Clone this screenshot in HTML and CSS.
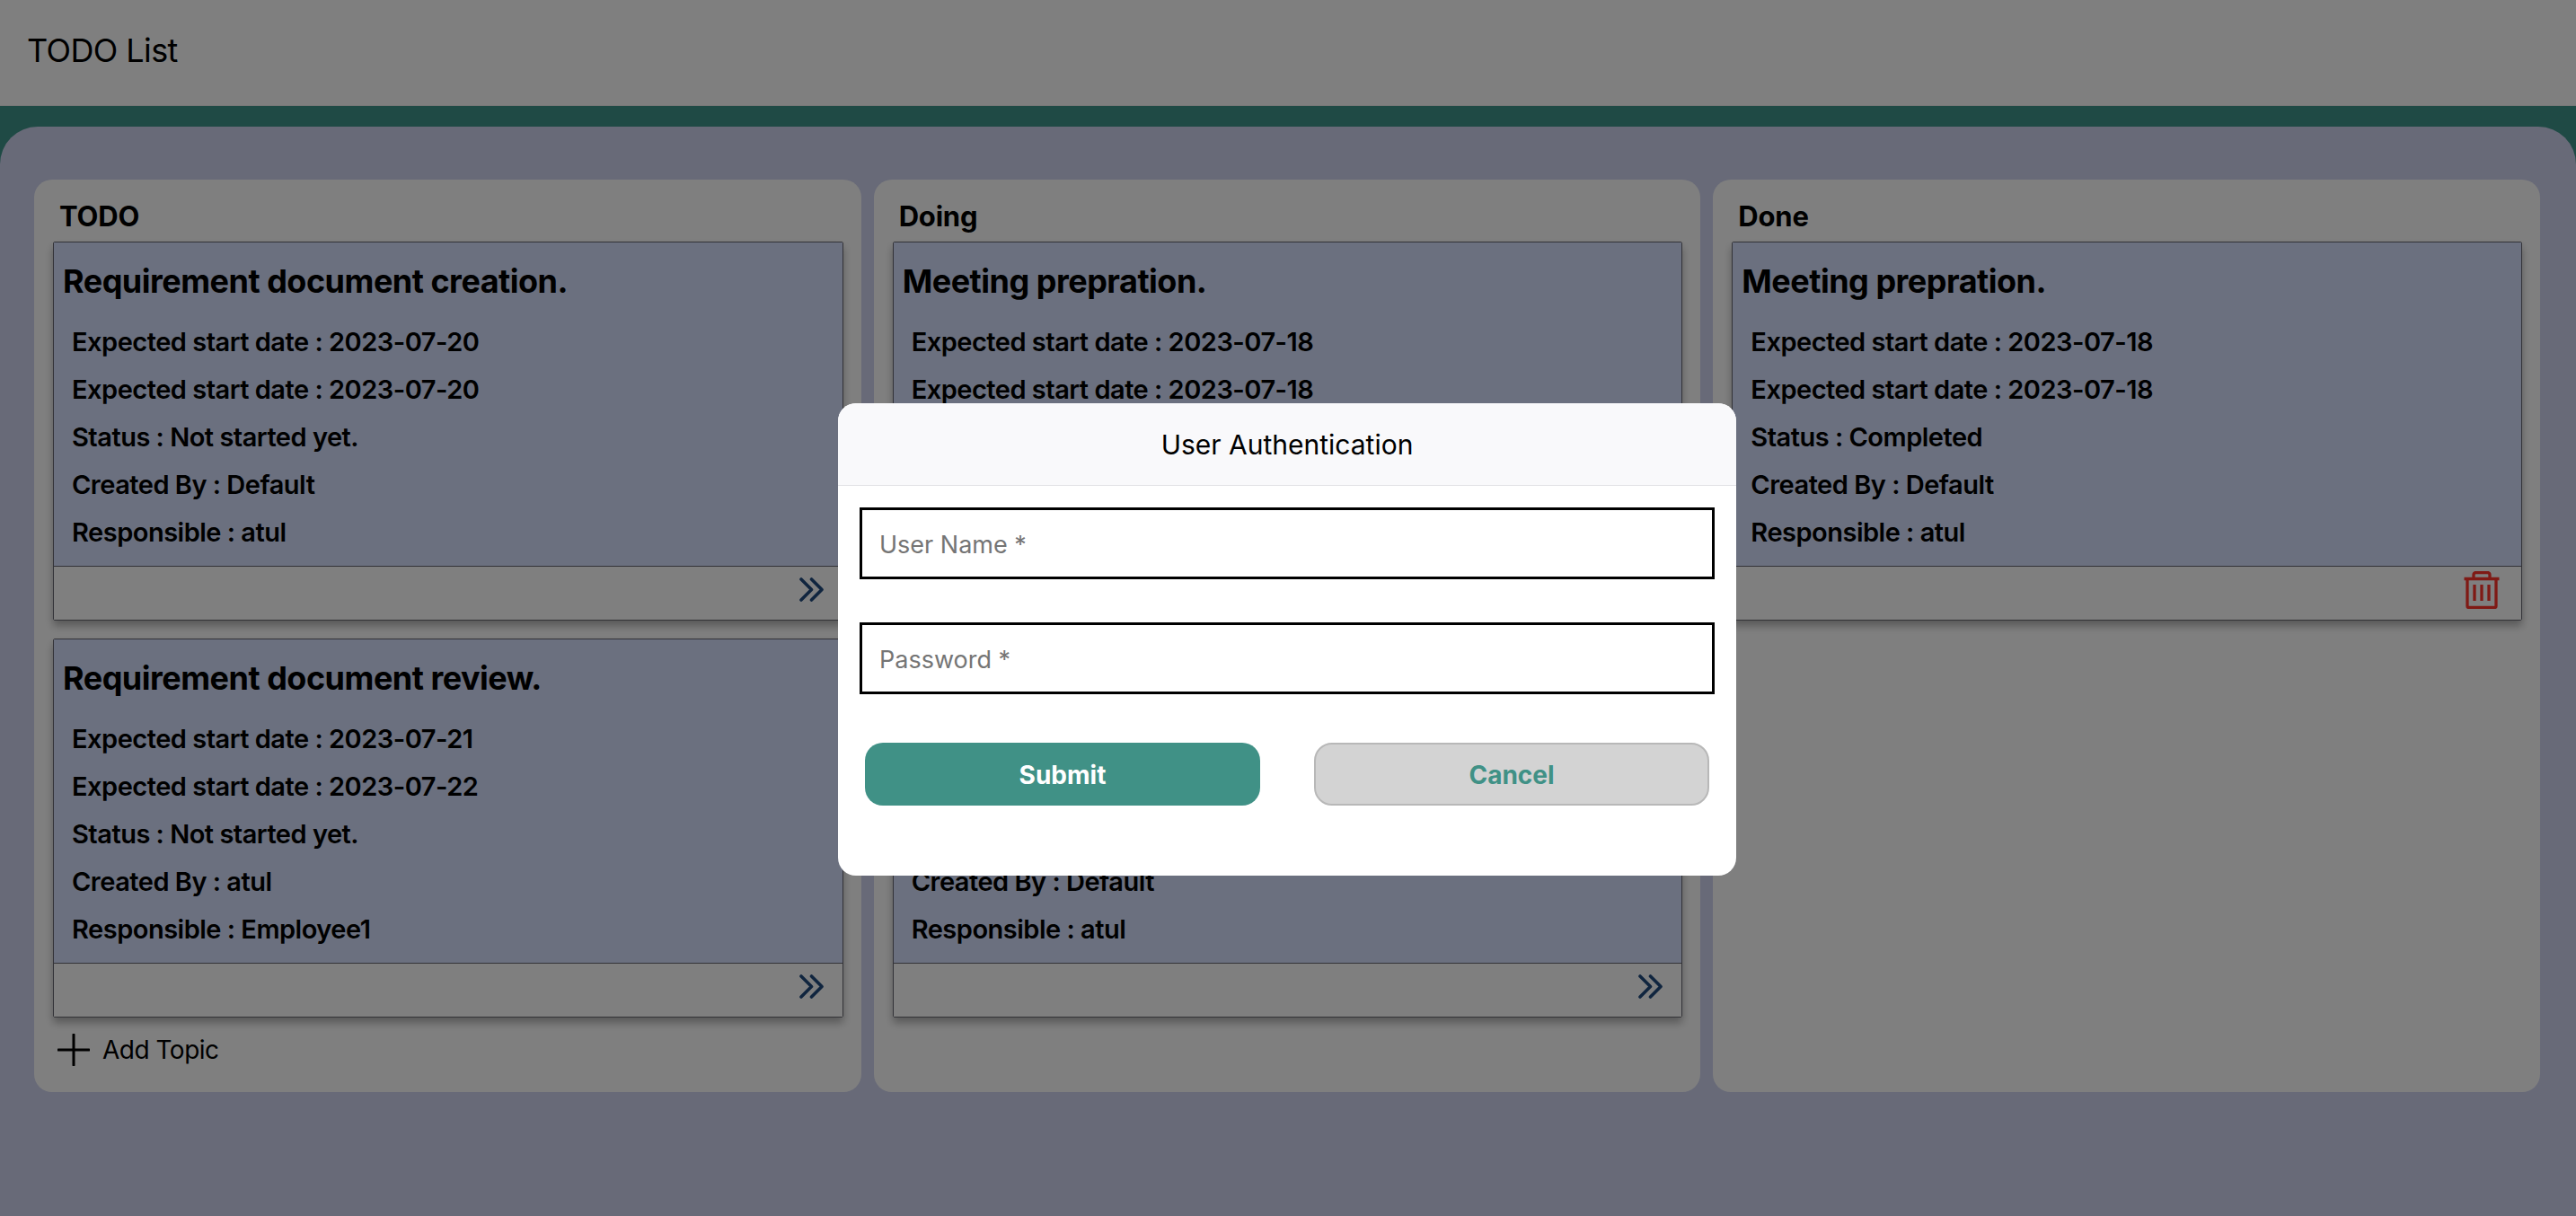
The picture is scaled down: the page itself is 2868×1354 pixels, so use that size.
FILE: index.html
```html
<!DOCTYPE html>
<html lang="en">
<head>
    <meta charset="UTF-8">
    <meta name="viewport" content="width=device-width, initial-scale=1.0">
    <title>TODO List</title>
    <link rel="stylesheet" href="styles.css">
</head>
<body>
    <svg class="icon-defs" aria-hidden="true">
        <symbol id="icon-move" viewBox="0 0 27 27">
            <path d="M2 2l11.5 11.5L2 25M13.5 2L25 13.5 13.5 25" fill="none" stroke="currentColor" stroke-width="3.6" stroke-linecap="round" stroke-linejoin="round"/>
        </symbol>
        <symbol id="icon-trash" viewBox="0 0 42 42">
            <path d="M1.500 8.500h39M12 8V4a2.500 2.500 0 0 1 2.500-2.500h13A2.500 2.500 0 0 1 30 4v4M5 8v31a1.500 1.500 0 0 0 1.500 1.500h29A1.500 1.500 0 0 0 37 39V8M13 15v18M21 15v18M29 15v18" fill="none" stroke="currentColor" stroke-width="3.3"/>
        </symbol>
    </svg>

    <header class="top-bar">TODO List</header>

    <main class="board">
        <!-- TODO column -->
        <section class="column">
            <h2 class="column-title">TODO</h2>
            <article class="card">
                <div class="card-body">
                    <h3 class="card-title">Requirement document creation.</h3>
                    <p class="card-line">Expected start date : 2023-07-20</p>
                    <p class="card-line">Expected start date : 2023-07-20</p>
                    <p class="card-line">Status : Not started yet.</p>
                    <p class="card-line">Created By : Default</p>
                    <p class="card-line">Responsible : atul</p>
                </div>
                <div class="card-footer"><svg class="icon-move"><use href="#icon-move"/></svg></div>
            </article>
            <article class="card">
                <div class="card-body">
                    <h3 class="card-title">Requirement document review.</h3>
                    <p class="card-line">Expected start date : 2023-07-21</p>
                    <p class="card-line">Expected start date : 2023-07-22</p>
                    <p class="card-line">Status : Not started yet.</p>
                    <p class="card-line">Created By : atul</p>
                    <p class="card-line">Responsible : Employee1</p>
                </div>
                <div class="card-footer"><svg class="icon-move"><use href="#icon-move"/></svg></div>
            </article>
            <div class="add-topic">
                <svg class="icon-plus" viewBox="0 0 36 36"><path d="M18 1v34M1 18h34" fill="none" stroke="currentColor" stroke-width="3" stroke-linecap="round"/></svg>
                <span>Add Topic</span>
            </div>
        </section>

        <!-- Doing column -->
        <section class="column">
            <h2 class="column-title">Doing</h2>
            <article class="card">
                <div class="card-body">
                    <h3 class="card-title">Meeting prepration.</h3>
                    <p class="card-line">Expected start date : 2023-07-18</p>
                    <p class="card-line">Expected start date : 2023-07-18</p>
                    <p class="card-line">Status : In progress.</p>
                    <p class="card-line">Created By : Default</p>
                    <p class="card-line">Responsible : atul</p>
                </div>
                <div class="card-footer"><svg class="icon-move"><use href="#icon-move"/></svg></div>
            </article>
            <article class="card">
                <div class="card-body">
                    <h3 class="card-title">Meeting prepration.</h3>
                    <p class="card-line">Expected start date : 2023-07-18</p>
                    <p class="card-line">Expected start date : 2023-07-18</p>
                    <p class="card-line">Status : In progress.</p>
                    <p class="card-line">Created By : Default</p>
                    <p class="card-line">Responsible : atul</p>
                </div>
                <div class="card-footer"><svg class="icon-move"><use href="#icon-move"/></svg></div>
            </article>
        </section>

        <!-- Done column -->
        <section class="column">
            <h2 class="column-title">Done</h2>
            <article class="card">
                <div class="card-body">
                    <h3 class="card-title">Meeting prepration.</h3>
                    <p class="card-line">Expected start date : 2023-07-18</p>
                    <p class="card-line">Expected start date : 2023-07-18</p>
                    <p class="card-line">Status : Completed</p>
                    <p class="card-line">Created By : Default</p>
                    <p class="card-line">Responsible : atul</p>
                </div>
                <div class="card-footer"><svg class="icon-trash"><use href="#icon-trash"/></svg></div>
            </article>
        </section>
    </main>

    <!-- Login dialog -->
    <div class="overlay">
        <form class="dialog">
            <div class="dialog-header">User Authentication</div>
            <div class="dialog-body">
                <input class="dialog-input" type="text" placeholder="User Name *">
                <input class="dialog-input" type="password" placeholder="Password *">
                <div class="dialog-actions">
                    <button class="btn btn-submit" type="button">Submit</button>
                    <button class="btn btn-cancel" type="button">Cancel</button>
                </div>
            </div>
        </form>
    </div>
</body>
</html>
```

FILE: styles.css
```css
* {
    box-sizing: border-box;
}
html, body {
    height: 100%;
}
body {
    margin: 0;
    background-color: #3e948a;
    color: #000000;
    font-family: Inter, "Liberation Sans", sans-serif;
    display: flex;
    flex-direction: column;
    overflow: hidden;
}
.icon-defs {
    display: none;
}
.top-bar {
    height: 118px;
    flex-shrink: 0;
    padding: 0 30px 5px;
    display: flex;
    align-items: center;
    background-color: #ffffff;
    border-bottom: 1px solid #f0f0f0;
    font-size: 36px;
    letter-spacing: -0.6px;
}
.board {
    flex: 1;
    margin-top: 23px;
    padding: 59px 40px 0 38px;
    background-color: #d0d4f0;
    border-radius: 42px 42px 0 0;
    display: grid;
    grid-template-columns: repeat(3, 1fr);
    column-gap: 14px;
    align-items: start;
}
.column {
    height: 1016px;
    padding: 0 20px 0 21px;
    background-color: #ffffff;
    border-radius: 20px;
}
.column-title {
    height: 69px;
    margin: 0;
    padding: 20px 0 0 7px;
    font-size: 31px;
    line-height: 42px;
    font-weight: 700;
    letter-spacing: -0.2px;
}
.card {
    height: 422px;
    margin-bottom: 20px;
    border: 1px solid #666670;
    border-radius: 2px;
    box-shadow: 0 6px 10px rgba(0, 0, 0, 0.3);
    display: flex;
    flex-direction: column;
}
.card-body {
    flex: 1;
    padding: 19px 10px 0;
    background-color: #d6e0ff;
}
.card-title {
    margin: 0 0 17px;
    font-size: 36px;
    line-height: 48px;
    font-weight: 700;
    letter-spacing: -0.5px;
}
.card-line {
    margin: 0;
    padding-left: 10px;
    font-size: 29px;
    line-height: 53px;
    font-weight: 600;
    letter-spacing: -0.5px;
}
.card-footer {
    height: 60px;
    flex-shrink: 0;
    padding: 0 21px 8px 0;
    display: flex;
    justify-content: flex-end;
    align-items: center;
    background-color: #ffffff;
    border-top: 1px solid #666670;
}
.icon-move {
    width: 27px;
    height: 27px;
    color: #204a7e;
}
.icon-trash {
    width: 42px;
    height: 42px;
    margin-right: 2px;
    color: #fe342a;
}
.add-topic {
    margin-top: -2px;
    padding-left: 5px;
    display: flex;
    align-items: center;
    gap: 14px;
    font-size: 28px;
    letter-spacing: -0.5px;
}
.icon-plus {
    width: 36px;
    height: 36px;
}
.overlay {
    position: fixed;
    inset: 0;
    padding: 449px 2px 0 0;
    display: flex;
    justify-content: center;
    align-items: flex-start;
    background-color: rgba(0, 0, 0, 0.5);
}
.dialog {
    width: 1000px;
    height: 526px;
    background-color: #ffffff;
    border-radius: 20px;
    overflow: hidden;
}
.dialog-header {
    height: 92px;
    display: flex;
    justify-content: center;
    align-items: center;
    background-color: #f9f9fb;
    border-bottom: 1px solid #e2e2e6;
    font-size: 30px;
}
.dialog-body {
    padding: 24px 24px 0;
}
.dialog-input {
    display: block;
    width: 100%;
    height: 80px;
    margin-bottom: 48px;
    padding: 2px 19px 0;
    border: 3px solid #000000;
    border-radius: 0;
    outline: none;
    font-family: inherit;
    font-size: 27px;
}
.dialog-input::placeholder {
    color: #757575;
}
.dialog-actions {
    margin-top: 54px;
    padding: 0 6px;
    display: flex;
    justify-content: space-between;
}
.btn {
    width: 440px;
    height: 70px;
    padding-top: 2px;
    border-radius: 20px;
    font-family: inherit;
    font-size: 28px;
    font-weight: 700;
}
.btn-submit {
    background-color: #409186;
    border: none;
    color: #ffffff;
}
.btn-cancel {
    background-color: #d3d3d3;
    border: 2px solid #b8b8b8;
    color: #409186;
}
```
